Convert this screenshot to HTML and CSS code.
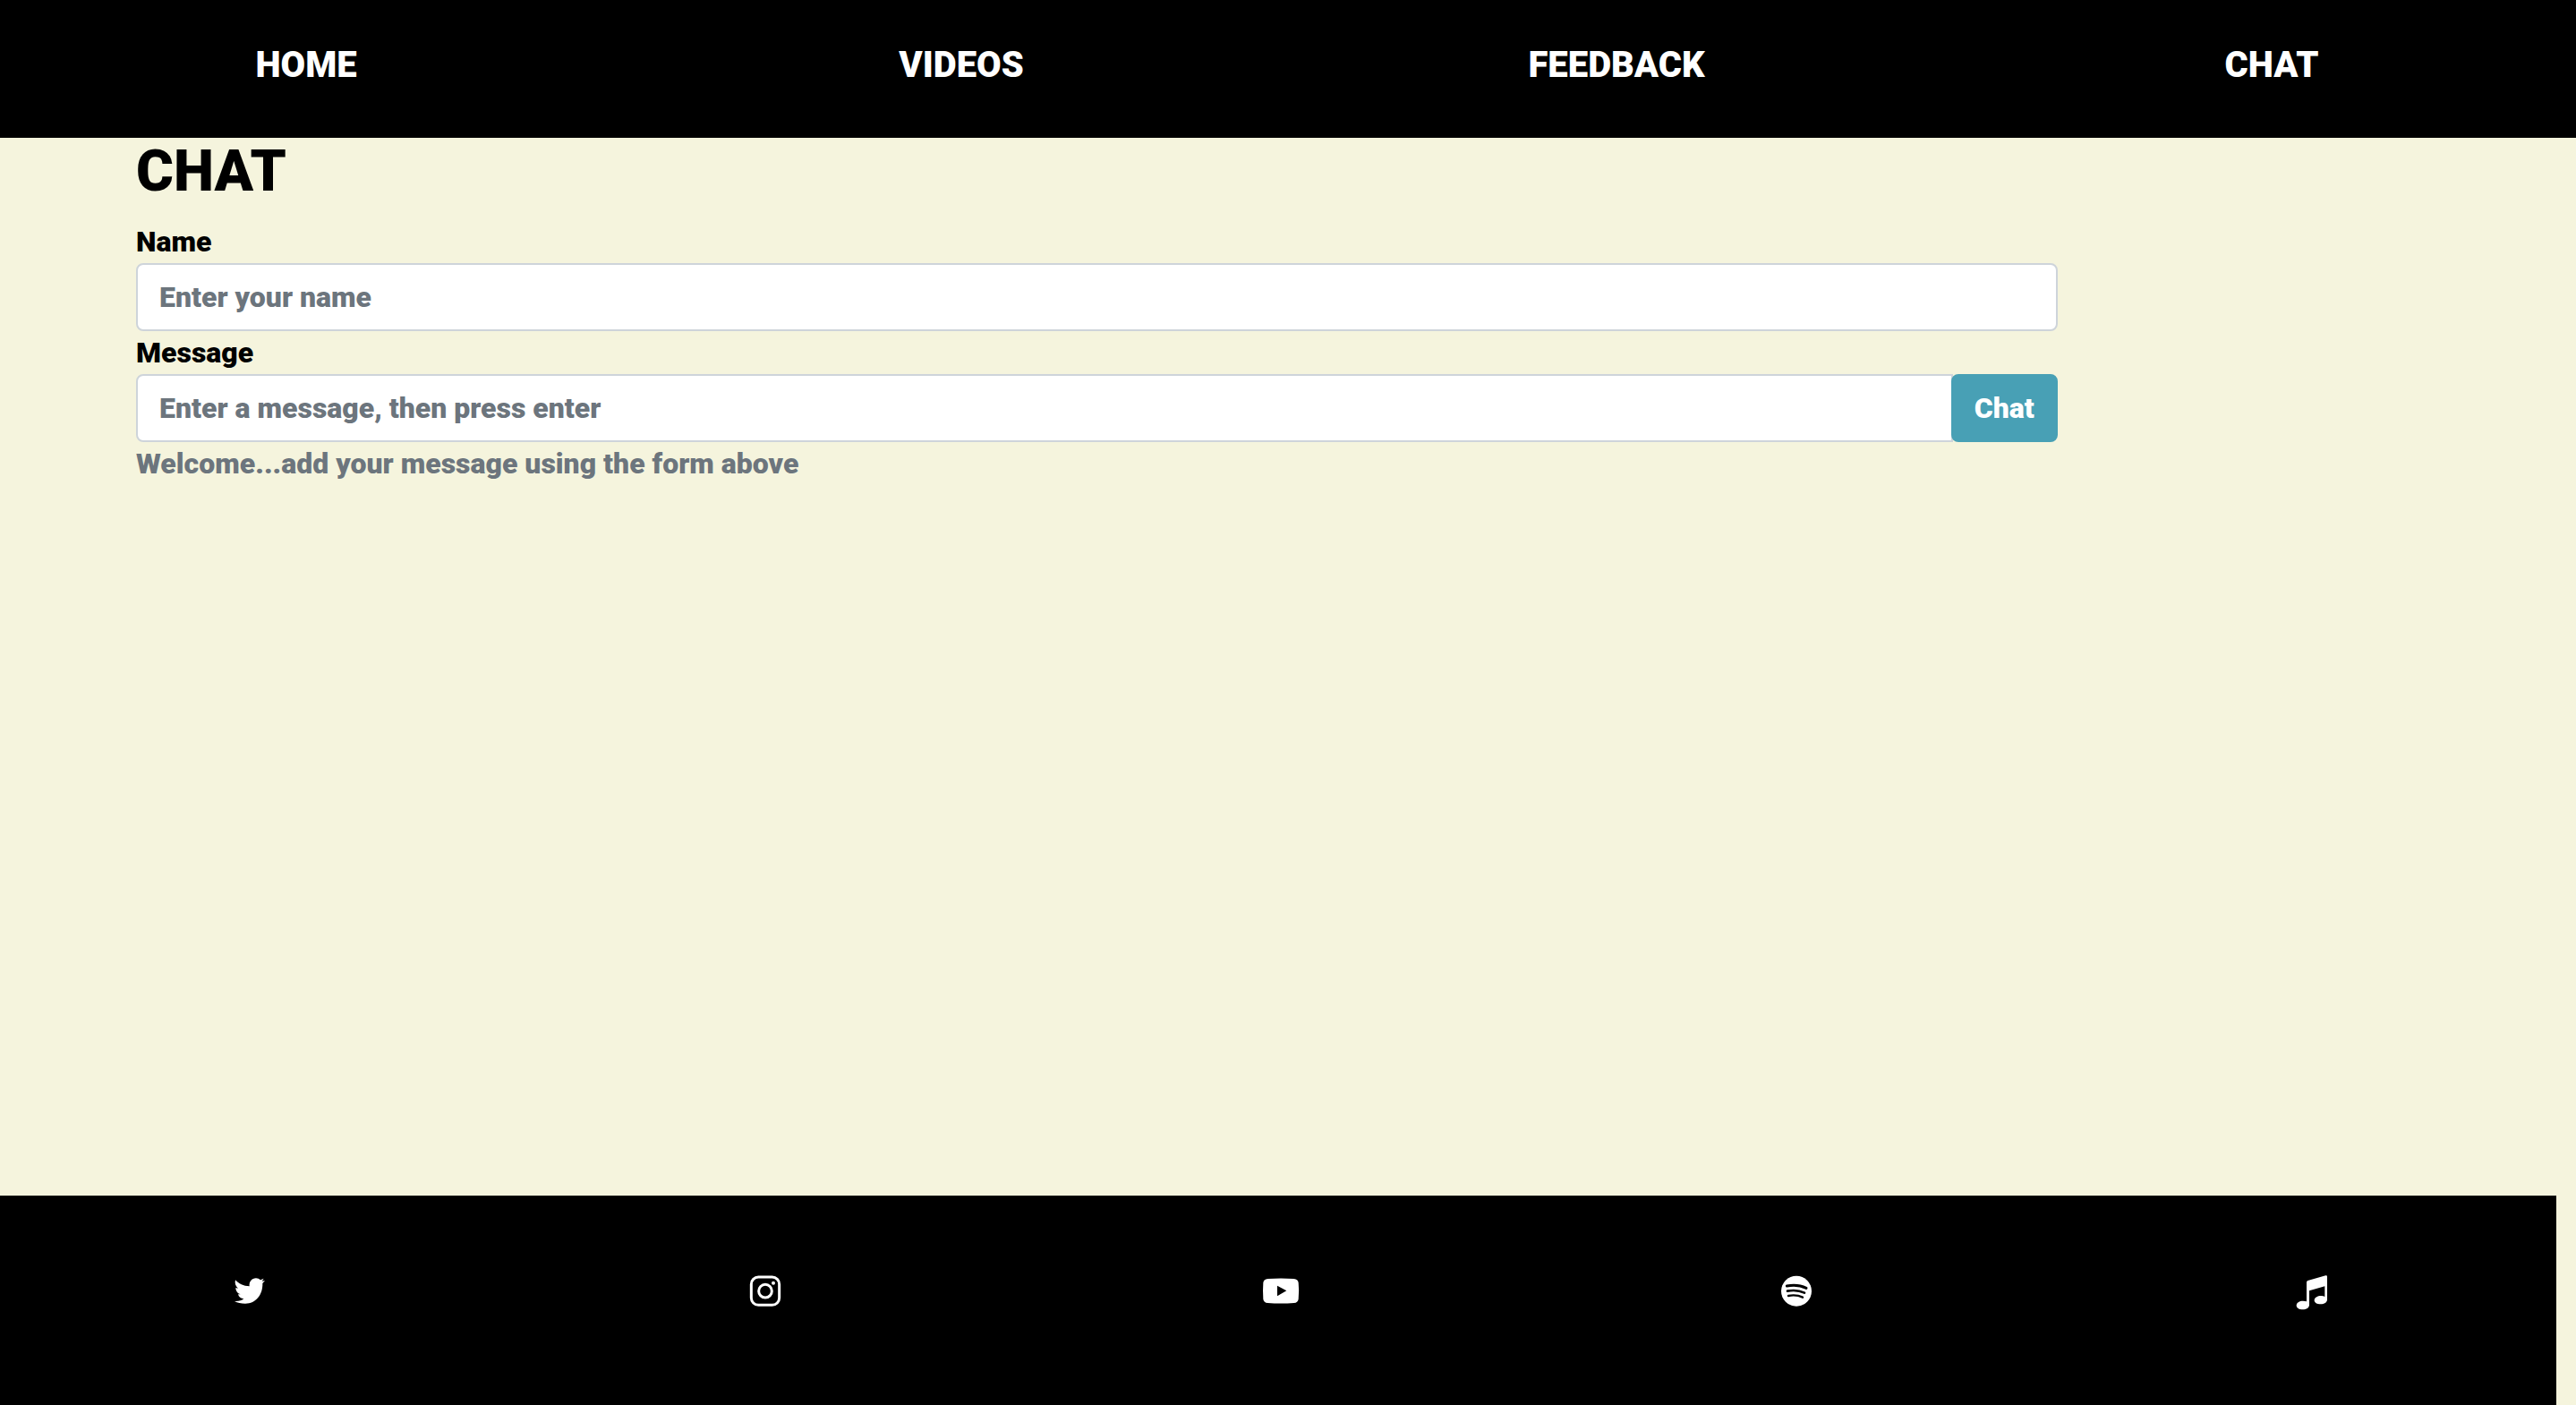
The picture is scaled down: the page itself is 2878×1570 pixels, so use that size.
FILE: index.html
```
<!DOCTYPE html>
<html lang="en">
<head>
  <meta charset="utf-8">
  <meta name="viewport" content="width=device-width, initial-scale=1">
  <title>Chat</title>
  <link rel="stylesheet" href="styles.css">
</head>
<body>
  <header class="site-header">
    <nav class="site-nav" aria-label="Main">
      <a href="#home">HOME</a>
      <a href="#videos">VIDEOS</a>
      <a href="#feedback">FEEDBACK</a>
      <a href="#chat">CHAT</a>
    </nav>
  </header>

  <main class="content" id="chat">
    <h1 class="title">CHAT</h1>
    <form class="chat-form">
      <label class="label" for="name">Name</label>
      <input class="field" id="name" type="text" placeholder="Enter your name">
      <label class="label" for="message">Message</label>
      <div class="field-group">
        <input class="field" id="message" type="text" placeholder="Enter a message, then press enter">
        <button class="send" type="button">Chat</button>
      </div>
    </form>
    <p class="welcome">Welcome...add your message using the form above</p>
  </main>

  <footer class="site-footer">
    <div class="social">
      <a href="#twitter" aria-label="Twitter">
        <svg class="icon" viewBox="-3 0 180 180"><path d="M39 61C50 74 66 81 86 82C84 67 94 55 108 55C114 55 119 57 123 61L134 56L128 65L138 63L130 72C131 110 108 140 72 140C58 140 46 138 36 132C49 133 60 130 67 124C57 123 50 118 48 109L56 109C46 106 40 97 40 87L48 89C39 82 36 71 39 61Z"/></svg>
      </a>
      <a href="#instagram" aria-label="Instagram">
        <svg class="icon" viewBox="0 0 180 180"><rect class="line" x="43" y="51" width="94" height="94" rx="24"/><circle class="line" cx="90" cy="98" r="22"/><circle cx="117" cy="71" r="6"/></svg>
      </a>
      <a href="#youtube" aria-label="YouTube">
        <svg class="icon" viewBox="3 0 180 180"><path fill-rule="evenodd" d="M49 57Q93 54 137 57Q150 58 152 70Q155 98 152 125Q150 137 137 138Q93 141 49 138Q36 137 34 125Q32 98 34 70Q36 58 49 57ZM81 80V115L112 97Z"/></svg>
      </a>
      <a href="#spotify" aria-label="Spotify">
        <svg class="icon" viewBox="0 0 180 180"><circle cx="90" cy="98" r="51"/><path class="wave" stroke-width="9" d="M58 81Q94 74 123 88"/><path class="wave" stroke-width="8" d="M60 98Q92 92 117 104"/><path class="wave" stroke-width="7" d="M63 114Q90 109 111 119"/></svg>
      </a>
      <a href="#music" aria-label="Music">
        <svg class="icon" viewBox="-6 0 180 180"><path d="M66 69Q66 65 70 63L130 46Q135 45 135 50V127C135 136 125 142 113 142C101 142 92 137 92 129C92 120 103 114 115 114C120 114 124 115 127 117V82L75 97V145C75 154 65 160 53 160C41 160 32 154 32 146C32 137 42 131 54 131C59 131 63 132 66 133Z"/></svg>
      </a>
    </div>
  </footer>
</body>
</html>
```
FILE: styles.css
```
* {
  box-sizing: border-box;
}

body {
  display: flex;
  flex-direction: column;
  min-height: 100vh;
  margin: 0;
  overflow-x: hidden;
  background: #f5f4dd;
  color: #000;
  font-family: Roboto, "Liberation Sans", sans-serif;
  font-size: 32px;
  font-weight: 900;
  line-height: 48px;
}

.site-header {
  padding: 43px 0 51px;
  background: #000;
}

.site-nav {
  display: grid;
  grid-template-columns: repeat(4, 1fr);
  margin: 0 -26px 0 -24px;
  font-size: 40px;
  line-height: 60px;
  text-align: center;
}

.site-nav a {
  color: #fff;
  text-decoration: none;
}

.content {
  flex: 1;
  padding: 0 152px;
}

.title {
  margin: 0 0 16px;
  font-size: 64px;
  font-weight: 900;
  line-height: 76px;
}

.chat-form {
  width: 83.4%;
}

.label {
  display: block;
}

.field {
  display: block;
  width: 100%;
  height: 76px;
  padding: 12px 24px;
  border: 2px solid #ced4da;
  border-radius: 8px;
  background: #fff;
  color: #495057;
  font: inherit;
}

.field::placeholder {
  color: #6c757d;
  opacity: 1;
}

.field-group {
  display: flex;
}

.field-group .field {
  flex: 1;
  border-radius: 8px 0 0 8px;
}

.send {
  margin-left: -2px;
  padding: 12px 24px;
  border: 2px solid #48a0b5;
  border-radius: 8px;
  background: #48a0b5;
  color: #fff;
  font: inherit;
}

.welcome {
  margin: 0;
  color: #6c757d;
}

.site-footer {
  margin-right: 22px;
  padding: 74px 0 100px;
  background: #000;
}

.social {
  display: grid;
  grid-template-columns: repeat(5, 1fr);
  justify-items: center;
  margin: 0 -15px 0 -9px;
}

.social a {
  display: block;
}

.icon {
  display: block;
  width: 60px;
  height: 60px;
  fill: #fff;
}

.line {
  fill: none;
  stroke: #fff;
  stroke-width: 9;
}

.wave {
  fill: none;
  stroke: #000;
  stroke-linecap: round;
}
```
